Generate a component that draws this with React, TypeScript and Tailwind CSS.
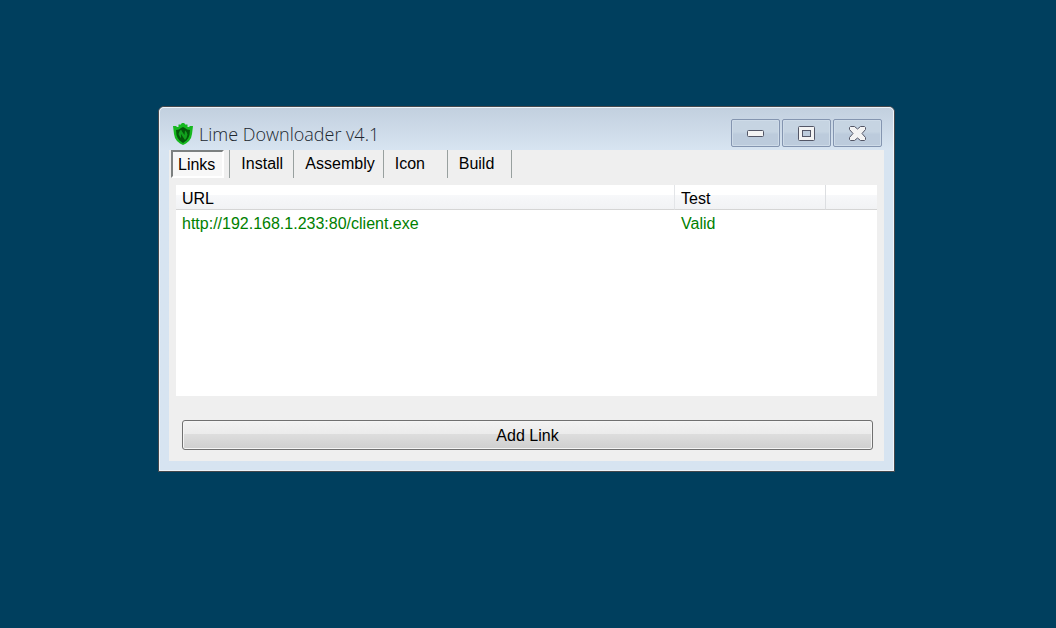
import { useState } from 'react';

const tabs = ['Links', 'Install', 'Assembly', 'Icon', 'Build'];

const captionButton =
  'flex h-7 w-[49px] items-center justify-center rounded-[2px] border border-[#8495b0] bg-linear-to-b from-[#c6d4e2] from-45% to-[#bccbdc] to-55% shadow-[inset_0_0_0_1px_#cedbe8]';

function ShieldIcon() {
  return (
    <svg width="20" height="22" viewBox="0 0 20 22" aria-hidden="true">
      <path
        d="M0 3H3L4 4 5.500 4V1.500H8V1L9 0H11L12 1V1.500H14.500V4L16 4 17 3H20L19.500 7 19 11Q18.500 15.500 16 18L13 20.500 10 22 7 20.500 4 18Q1.500 15.500 1 11L.5 7Z"
        fill="#16b81f"
      />
      <path d="M3 7 6 6.500 8 5 10 4 12 5 14 6.500 17 7 16.500 12Q15.500 15.500 13.500 17.500L10 20 6.500 17.500Q4.500 15.500 3.500 12Z" fill="#04570a" />
      <path d="M7 14 5.500 11 6.500 8.500 8 6.500 9 8.500 11.500 12 12 7.500 13.500 9 14.500 11.500 13.500 15 12 17 10 14 8 11V15Z" fill="#12a01d" />
    </svg>
  );
}

function MinimizeIcon() {
  return (
    <svg width="17" height="7" viewBox="0 0 17 7" aria-hidden="true">
      <rect x=".5" y=".5" width="16" height="6" rx="1" fill="#f3f3f3" stroke="#535666" />
    </svg>
  );
}

function MaximizeIcon() {
  return (
    <svg width="17" height="15" viewBox="0 0 17 15" aria-hidden="true">
      <rect x=".5" y=".5" width="16" height="14" rx="1" fill="#f3f3f3" stroke="#535666" />
      <rect x="4.500" y="4.500" width="8" height="6" fill="#bdccdc" stroke="#535666" />
    </svg>
  );
}

function CloseIcon() {
  return (
    <svg width="17" height="15" viewBox="0 0 17 15" aria-hidden="true">
      <path
        d="M1.500 .5H5.500L8.500 3 11.500 .5H15.500L16.500 1.500V3.500L13 7.500 16.500 11.500V13.500L15.500 14.500H11.500L8.500 12 5.500 14.500H1.500L.5 13.500V11.500L4 7.500 .5 3.500V1.500Z"
        fill="#f3f3f3"
        stroke="#535666"
        strokeLinejoin="round"
      />
    </svg>
  );
}

export default function App() {
  const [active, setActive] = useState('Links');

  return (
    <main className="min-h-screen bg-[#003f5e] pt-[106px] pr-[161px] pb-10 pl-[158px] font-['Liberation_Sans',Arial,sans-serif] text-base leading-5 text-black">
      <section className="rounded-t-md border border-[#45484c] bg-[#d7e4f1]">
        <div className="rounded-t-[5px] border border-[#edf3f9] bg-linear-to-b from-[#c2d0df] to-[#d7e4f1] to-[42px] px-[9px] pb-[9px]">
          <header className="flex h-[42px] items-start justify-between pl-1 pr-0.5">
            <div className="flex items-center gap-1.5 pt-3">
              <ShieldIcon />
              <h1 className="font-['Open_Sans','Noto_Sans',sans-serif] text-[18px] leading-7 font-light text-[#20272f]">Lime Downloader v4.1</h1>
            </div>
            <div className="flex gap-0.5 pt-[11px]">
              <button type="button" aria-label="Minimize" className={captionButton}>
                <MinimizeIcon />
              </button>
              <button type="button" aria-label="Maximize" className={captionButton}>
                <MaximizeIcon />
              </button>
              <button type="button" aria-label="Close" className={captionButton}>
                <CloseIcon />
              </button>
            </div>
          </header>

          <div className="bg-[#efefef] pb-[11px]">
            <nav role="tablist" className="flex h-7 pl-0.5">
              {tabs.map((tab) => (
                <div key={tab} className="flex border-r border-[#98a09f] first:pr-[5px] not-first:min-w-16">
                  <button
                    type="button"
                    role="tab"
                    aria-selected={active === tab}
                    onClick={() => setActive(tab)}
                    className={
                      active === tab
                        ? 'border-2 border-t-[#7c8080] border-r-white border-b-white border-l-[#7c8080] bg-[#f7f7f7] pt-0.5 pr-[7px] pl-[5px]'
                        : 'pr-2 pl-[11px] text-left'
                    }
                  >
                    {tab}
                  </button>
                </div>
              ))}
            </nav>

            <div className="mt-[7px] mr-[7px] ml-[7px] min-h-[211px] bg-white">
              <table className="w-full table-fixed border-separate border-spacing-0 text-left">
                <colgroup>
                  <col />
                  <col className="w-[151px]" />
                  <col className="w-[51px]" />
                </colgroup>
                <thead>
                  <tr className="h-[25px] bg-linear-to-b from-white from-40% via-[#f7f8fa] via-40% to-[#f1f2f4] [&>th]:border-b [&>th]:border-b-[#d5d5d5]">
                    <th className="border-r border-r-[#e3e5e8] pt-1 pl-1.5 font-normal">URL</th>
                    <th className="border-r border-r-[#dcdee1] pt-1 pl-1.5 font-normal">Test</th>
                    <th aria-label="Options" />
                  </tr>
                </thead>
                <tbody>
                  <tr className="h-7 text-[#008000]">
                    <td className="pl-1.5">http://192.168.1.233:80/client.exe</td>
                    <td className="pl-1.5">Valid</td>
                    <td />
                  </tr>
                </tbody>
              </table>
            </div>

            <div className="mt-6 mr-[11px] ml-[13px] flex">
              <button
                type="button"
                className="h-[30px] grow rounded-[3px] border border-[#707070] bg-[linear-gradient(#f2f2f2,#ebebeb_48%,#dddddd_48%,#cfcfcf)] pt-0.5 shadow-[inset_0_0_0_1px_#f5f5f5]"
              >
                Add Link
              </button>
            </div>
          </div>
        </div>
      </section>
    </main>
  );
}
